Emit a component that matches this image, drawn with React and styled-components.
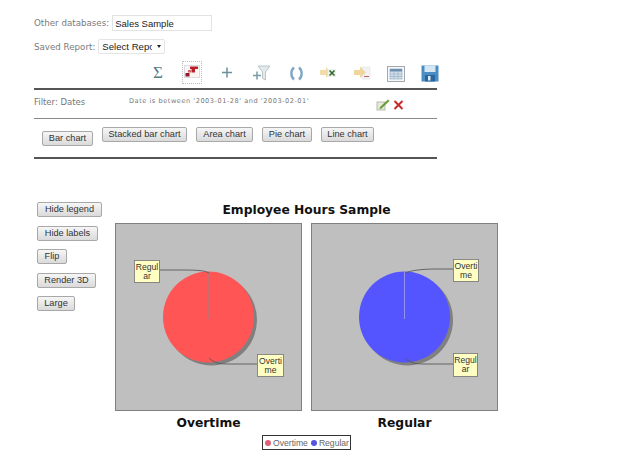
import React from "react";
import styled, { createGlobalStyle } from "styled-components";

const Global = createGlobalStyle`
  html, body { margin: 0; padding: 0; background: #fff; overflow: hidden; }
  body { font-family: "DejaVu Sans", sans-serif; }
`;

const Page = styled.div`
  width: 640px;
  height: 457px;
  overflow: hidden;
  padding: 15px 0 0 34px;
  box-sizing: border-box;
`;

const Row = styled.div`
  display: flex;
  align-items: center;
  height: ${(p) => p.$h}px;
  margin-top: ${(p) => p.$top || 0}px;
`;

const FieldLabel = styled.span`
  font-size: 8.7px;
  color: #7a7a7a;
  margin-right: ${(p) => p.$gap}px;
  white-space: nowrap;
`;

const TextInput = styled.input`
  width: 100px;
  height: 16px;
  box-sizing: border-box;
  border: 1px solid #e2e2e2;
  padding: 0 2px;
  font: 9.5px "Liberation Sans", sans-serif;
  color: #222;
  outline: none;
`;

const SelectWrap = styled.div`
  position: relative;
  width: 67px;
  height: 15px;
  &::after {
    content: "";
    position: absolute;
    right: 4px;
    top: 6px;
    border-left: 2.5px solid transparent;
    border-right: 2.5px solid transparent;
    border-top: 3px solid #222;
  }
`;

const Select = styled.select`
  appearance: none;
  display: block;
  width: 100%;
  height: 100%;
  box-sizing: border-box;
  border: 1px solid #e4e4e4;
  border-radius: 2px;
  background: #fff;
  padding: 0 12px 0 3px;
  font: 9.6px "Liberation Sans", sans-serif;
  color: #222;
`;

const Toolbar = styled.div`
  width: 403px;
  height: 27px;
  margin-top: 7px;
  padding: 0 0 4px 107px;
  box-sizing: border-box;
  display: flex;
  align-items: center;
`;

const ToolCell = styled.div`
  width: 34px;
  height: 23px;
  flex: none;
  display: flex;
  align-items: center;
  justify-content: center;
`;

const ActiveCell = styled.div`
  width: 20px;
  height: 23px;
  box-sizing: border-box;
  border: 1px dotted #bcbcbc;
  display: flex;
  justify-content: center;
  padding-top: 3px;
`;

const Rule = styled.div`
  width: 403px;
  height: ${(p) => p.$h}px;
  background: ${(p) => p.$c};
`;

const FilterRow = styled.div`
  width: 403px;
  height: 28px;
  display: flex;
  align-items: flex-start;
  padding-top: 6px;
  box-sizing: border-box;
`;

const FilterLabel = styled.span`
  font-size: 8.5px;
  line-height: 12px;
  color: #777;
  width: 95px;
  flex: none;
`;

const FilterText = styled.span`
  font-size: 6.6px;
  line-height: 10px;
  letter-spacing: 0.53px;
  color: #777;
  width: 247px;
  flex: none;
  white-space: nowrap;
`;

const FilterActions = styled.div`
  display: flex;
  gap: 3px;
  margin-top: 2px;
`;

const ChartTypes = styled.div`
  width: 403px;
  height: 38px;
  padding: 8px 0 0 8px;
  box-sizing: border-box;
  display: flex;
  align-items: flex-start;
  gap: 9px;
`;

const Button = styled.button`
  height: 15px;
  padding: 0;
  width: ${(p) => p.$w}px;
  margin-top: ${(p) => p.$top || 0}px;
  flex: none;
  box-sizing: border-box;
  border: 1px solid #a8a8a8;
  border-radius: 2px;
  background: linear-gradient(#f6f6f6, #dadada);
  font: 9.2px/13px "Liberation Sans", sans-serif;
  color: #333;
`;

const ChartArea = styled.div`
  display: flex;
  margin-top: 43px;
  margin-left: 3px;
`;

const SideButtons = styled.div`
  width: 78px;
  flex: none;
  display: flex;
  flex-direction: column;
  align-items: flex-start;
  gap: 8.5px;
`;

const ChartColumn = styled.div`
  width: 383px;
  display: flex;
  flex-direction: column;
  align-items: center;
`;

const ChartTitle = styled.div`
  font-size: 12.3px;
  font-weight: bold;
  color: #111;
  height: 21px;
  line-height: 17px;
  white-space: nowrap;
`;

const Panels = styled.div`
  display: flex;
  gap: 9px;
`;

const PanelColumn = styled.div`
  display: flex;
  flex-direction: column;
  align-items: center;
`;

const PanelBox = styled.div`
  width: 187px;
  height: 188px;
  box-sizing: border-box;
  background: #bfbfbf;
  border: 1px solid #808080;
`;

const PanelSvg = styled.svg`
  display: block;
`;

const PanelTitle = styled.div`
  font-size: 12.3px;
  font-weight: bold;
  color: #111;
  line-height: 16px;
  margin-top: 4px;
`;

const Legend = styled.div`
  display: flex;
  align-items: center;
  height: 15px;
  box-sizing: border-box;
  border: 1px solid #333;
  margin-top: 4px;
  padding: 0 1px 0 2px;
  gap: 3px;
  font: 8.6px "Liberation Sans", sans-serif;
  color: #666;
`;

const LegendItem = styled.span`
  display: flex;
  align-items: center;
  gap: 2px;
`;

const Dot = styled.span`
  width: 6px;
  height: 6px;
  border-radius: 50%;
  background: ${(p) => p.$c};
`;

const Icon = ({ children, w = 20, h = 20 }) => (
  <svg width={w} height={h} viewBox={`0 0 ${w} ${h}`}>{children}</svg>
);

const Callout = ({ x, y, w, h, a, b, line }) => (
  <g>
    <path d={line} fill="none" stroke="#5a5a5a" strokeWidth="0.9" />
    <rect x={x + 1} y={y + 1} width={w} height={h} fill="#8e8e8e" />
    <rect x={x + 0.5} y={y + 0.5} width={w} height={h} fill="#ffffc4" stroke="#777" strokeWidth="0.8" />
    <text x={x + w / 2 + 0.5} y={y + 9.5} textAnchor="middle" fontFamily="Liberation Sans, sans-serif" fontSize="8.6" fill="#333">{a}</text>
    <text x={x + w / 2 + 0.5} y={y + 19} textAnchor="middle" fontFamily="Liberation Sans, sans-serif" fontSize="8.6" fill="#333">{b}</text>
  </g>
);

const Pie = ({ color, seam, top, bottom }) => (
  <PanelSvg width="185" height="186" viewBox="0 0 185 186">
    <circle cx="95.5" cy="96" r="45.5" fill="#808080" />
    <circle cx="92.5" cy="93" r="45.5" fill={color} />
    <path d="M92.5 48V95" stroke={seam} strokeWidth="0.8" />
    <Callout {...top} />
    <Callout {...bottom} />
  </PanelSvg>
);

const Tools = () => (
  <>
    <ToolCell>
      <Icon><text x="10" y="15" textAnchor="middle" fontFamily="Liberation Serif, serif" fontSize="17" fill="#5a7d8a">Σ</text></Icon>
    </ToolCell>
    <ToolCell>
      <ActiveCell>
        <Icon w={16} h={13}>
          <rect x="0.5" y="0.5" width="15" height="12" fill="#fbf4f4" stroke="#dcdce4" />
          <path d="M6 1.5h8v2.5h-3v3.5H7.5V4H6z" fill="#b5202a" />
          <rect x="4" y="5" width="3" height="2.5" fill="#d46a70" />
          <rect x="1.5" y="8" width="4" height="3.5" fill="#8f1a24" />
        </Icon>
      </ActiveCell>
    </ToolCell>
    <ToolCell>
      <Icon><path d="M11 4.5V14.5M6 9.5H16" stroke="#6c909e" strokeWidth="1.5" /></Icon>
    </ToolCell>
    <ToolCell>
      <Icon>
        <path d="M8 3H20L15.5 9V17L12.5 15.5V9Z" fill="#e4eaec" stroke="#aebbbf" strokeWidth="0.8" />
        <path d="M7 8.5V16.5M3 12.5H11" stroke="#7a9ba8" strokeWidth="1.5" />
      </Icon>
    </ToolCell>
    <ToolCell>
      <Icon>
        <path d="M10 4.5C6.5 7.5 6.5 13.5 10 16.5M15 4.5C18.5 7.5 18.5 13.5 15 16.5" fill="none" stroke="#7fa8c4" strokeWidth="2.4" />
      </Icon>
    </ToolCell>
    <ToolCell>
      <Icon>
        <path d="M2 7H8V4L13 9.5L8 15V12H2Z" fill="#f2ddaa" />
        <rect x="10" y="6" width="8" height="8" fill="#eef2ea" />
        <path d="M11.5 7.5L16.5 12.5M16.5 7.5L11.5 12.5" stroke="#2b6a2e" strokeWidth="1.5" />
      </Icon>
    </ToolCell>
    <ToolCell>
      <Icon>
        <rect x="10" y="4" width="8" height="12" fill="#f0f2f6" stroke="#dcdfe6" strokeWidth="0.6" />
        <path d="M2 7H8V3.5L14 9.5L8 15V12H2Z" fill="#f0d59c" />
        <path d="M12 13.5H17" stroke="#b04030" strokeWidth="0.8" />
      </Icon>
    </ToolCell>
    <ToolCell>
      <Icon>
        <rect x="1.5" y="3.5" width="17" height="15" fill="#f4f6f9" stroke="#a3a9ae" />
        <rect x="4" y="6" width="12" height="10" fill="#d2dfea" stroke="#7e98b0" strokeWidth="0.5" />
        <rect x="4" y="6" width="12" height="2.5" fill="#6d8fb2" />
        <path d="M8 8.5V16M12 8.5V16M4 11H16M4 13.5H16" stroke="#8aa3ba" strokeWidth="0.5" />
      </Icon>
    </ToolCell>
    <ToolCell>
      <Icon>
        <path d="M1.5 2.5H18.5V18.5H1.5Z" fill="#4a8dc4" />
        <rect x="4.5" y="2.5" width="11" height="6.5" fill="#d6e6f2" />
        <rect x="5" y="12" width="10" height="6.5" fill="#2a669c" />
        <rect x="8" y="13" width="2.5" height="4.5" fill="#dfeaf3" />
      </Icon>
    </ToolCell>
  </>
);

export default function App() {
  return (
    <Page>
      <Global />
      <Row $h={16}>
        <FieldLabel $gap={3}>Other databases:</FieldLabel>
        <TextInput readOnly value="Sales Sample" />
      </Row>
      <Row $h={15} $top={8}>
        <FieldLabel $gap={3}>Saved Report:</FieldLabel>
        <SelectWrap>
          <Select defaultValue="r"><option value="r">Select Report</option></Select>
        </SelectWrap>
      </Row>
      <Toolbar><Tools /></Toolbar>
      <Rule $h={2} $c="#555" />
      <FilterRow>
        <FilterLabel>Filter: Dates</FilterLabel>
        <FilterText>Date is between '2003-01-28' and '2003-02-01'</FilterText>
        <FilterActions>
          <Icon w={14} h={13}>
            <rect x="1" y="4" width="8" height="8" fill="#e4eadc" stroke="#9aa58f" strokeWidth="0.7" />
            <path d="M4 9L12 1.5L13.5 3L5.5 10.5L3.5 11Z" fill="#6f9a3c" />
          </Icon>
          <Icon w={11} h={13}>
            <path d="M1.5 3L9.5 11M9.5 3L1.5 11" stroke="#c62a2a" strokeWidth="2" />
          </Icon>
        </FilterActions>
      </FilterRow>
      <Rule $h={1} $c="#888" />
      <ChartTypes>
        <Button $w={51} $top={4}>Bar chart</Button>
        <Button $w={85}>Stacked bar chart</Button>
        <Button $w={57}>Area chart</Button>
        <Button $w={50}>Pie chart</Button>
        <Button $w={53}>Line chart</Button>
      </ChartTypes>
      <Rule $h={2} $c="#555" />
      <ChartArea>
        <SideButtons>
          <Button $w={65}>Hide legend</Button>
          <Button $w={61}>Hide labels</Button>
          <Button $w={30}>Flip</Button>
          <Button $w={59}>Render 3D</Button>
          <Button $w={38}>Large</Button>
        </SideButtons>
        <ChartColumn>
          <ChartTitle>Employee Hours Sample</ChartTitle>
          <Panels>
            <PanelColumn>
              <PanelBox>
                <Pie
                  color="#ff5555"
                  seam="#b9757a"
                  top={{ x: 18, y: 36, w: 25, h: 22, a: "Regul", b: "ar", line: "M43 46H62C78 46 88 46 93 49" }}
                  bottom={{ x: 141, y: 130, w: 26, h: 22, a: "Overti", b: "me", line: "M93 134C98 139 104 140 112 140H141" }}
                />
              </PanelBox>
              <PanelTitle>Overtime</PanelTitle>
            </PanelColumn>
            <PanelColumn>
              <PanelBox>
                <Pie
                  color="#5555ff"
                  seam="#a5a5e8"
                  top={{ x: 141, y: 35, w: 25, h: 22, a: "Overti", b: "me", line: "M93 49C100 46 112 45 125 45H141" }}
                  bottom={{ x: 141, y: 129, w: 24, h: 23, a: "Regul", b: "ar", line: "M93 134C98 139 104 140 112 140H141" }}
                />
              </PanelBox>
              <PanelTitle>Regular</PanelTitle>
            </PanelColumn>
          </Panels>
          <Legend>
            <LegendItem><Dot $c="#e0607a" />Overtime</LegendItem>
            <LegendItem><Dot $c="#5555dd" />Regular</LegendItem>
          </Legend>
        </ChartColumn>
      </ChartArea>
    </Page>
  );
}
